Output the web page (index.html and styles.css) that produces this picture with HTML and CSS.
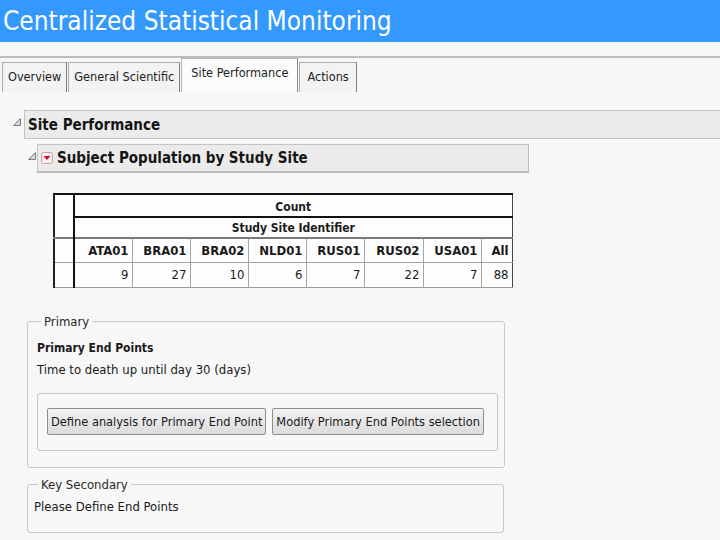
FILE: index.html
```html
<!DOCTYPE html>
<html lang="en">
<head>
    <meta charset="UTF-8">
    <title>Centralized Statistical Monitoring</title>
    <link rel="stylesheet" href="styles.css">
</head>
<body>

    <!-- Title bar -->
    <div class="titlebar">Centralized Statistical Monitoring</div>
    <div class="rule"></div>

    <!-- Tabs -->
    <div class="tabs">
        <div class="tab">Overview</div>
        <div class="tab">General Scientific</div>
        <div class="tab active">Site Performance</div>
        <div class="tab">Actions</div>
    </div>

    <!-- Outline: Site Performance -->
    <div class="outline">
        <svg class="disclose" width="8" height="8" viewBox="0 0 8 8"><polygon points="0.5,7.5 7.5,0.5 7.5,7.5" fill="#d8d8d8" stroke="#7a7a7a"/></svg>
        <div class="outline-bar">Site Performance</div>
    </div>

    <div class="outline sub">
        <svg class="disclose" width="8" height="8" viewBox="0 0 8 8"><polygon points="0.5,7.5 7.5,0.5 7.5,7.5" fill="#d8d8d8" stroke="#7a7a7a"/></svg>
        <div class="outline-bar">
            <svg class="hotspot" width="12" height="12" viewBox="0 0 12 12">
                <rect x="0.5" y="0.5" width="11" height="11" rx="2" fill="#fbeff0" stroke="#c8a0a4"/>
                <polygon points="2.5,4 9.5,4 6,8" fill="#d0102a"/>
            </svg>
            Subject Population by Study Site
        </div>
    </div>

    <!-- Count table -->
    <table class="counts">
        <colgroup>
            <col class="c-stub">
            <col class="c-site">
            <col class="c-site">
            <col class="c-site">
            <col class="c-site">
            <col class="c-site">
            <col class="c-wide">
            <col class="c-site">
            <col class="c-all">
        </colgroup>
        <tr>
            <td class="corner" rowspan="2"></td>
            <th colspan="8" class="count-head">Count</th>
        </tr>
        <tr>
            <th colspan="8" class="group-head">Study Site Identifier</th>
        </tr>
        <tr class="site-row">
            <td class="stub"></td>
            <th>ATA01</th>
            <th>BRA01</th>
            <th>BRA02</th>
            <th>NLD01</th>
            <th>RUS01</th>
            <th>RUS02</th>
            <th>USA01</th>
            <th>All</th>
        </tr>
        <tr class="data-row">
            <td class="stub"></td>
            <td>9</td>
            <td>27</td>
            <td>10</td>
            <td>6</td>
            <td>7</td>
            <td>22</td>
            <td>7</td>
            <td>88</td>
        </tr>
    </table>

    <!-- End point panels -->
    <fieldset class="panel primary">
        <legend>Primary</legend>
        <p class="panel-title">Primary End Points</p>
        <p>Time to death up until day 30 (days)</p>
        <div class="button-box">
            <button>Define analysis for Primary End Point</button>
            <button>Modify Primary End Points selection</button>
        </div>
    </fieldset>

    <fieldset class="panel secondary">
        <legend>Key Secondary</legend>
        <p>Please Define End Points</p>
    </fieldset>

</body>
</html>
```

FILE: styles.css
```css
/* Reset */
* {
    margin: 0;
    padding: 0;
    box-sizing: border-box;
}

body {
    background-color: #f7f7f7;
    color: #1a1a1a;
    font-family: "DejaVu Sans Condensed", "DejaVu Sans", sans-serif;
    font-size: 13px;
}

/* Title bar */
.titlebar {
    height: 42px;
    line-height: 42px;
    padding-left: 3px;
    background-color: #3399ff;
    color: #fff;
    font-size: 26px;
}

.rule {
    margin-top: 14px;
    border-top: 2px solid #bdbdbd;
}

/* Tabs */
.tabs {
    display: flex;
    align-items: flex-end;
    gap: 1px;
    padding-left: 2px;
    height: 34px;
}

.tab {
    height: 30px;
    line-height: 28px;
    padding: 0 5px;
    border: 1px solid #ababab;
    border-bottom: none;
    border-right-color: #7d7d7d;
    background-color: #f3f3f3;
    font-size: 12.6px;
    color: #222;
}

.tab:last-child {
    padding: 0 7px;
}

.tab.active {
    height: 34px;
    line-height: 28px;
    padding: 0 9px;
    background-color: #fbfbfb;
    border-color: #b5b5b5;
    border-right-color: #8a8a8a;
}

/* Outline nodes */
.outline {
    display: flex;
    align-items: center;
    margin-top: 18px;
    padding-left: 13px;
    gap: 3px;
}

.outline .disclose {
    margin-top: -6px;
}

.outline-bar {
    flex: 1;
    display: flex;
    align-items: center;
    height: 29px;
    padding-left: 3px;
    background-color: #ebebeb;
    border: 1px solid #c4c4c4;
    border-right: none;
    font-weight: bold;
    font-size: 15px;
    color: #151515;
}

.outline.sub {
    margin-top: 5px;
    padding-left: 28px;
    gap: 1px;
}

.outline.sub .outline-bar {
    flex: 0 0 492px;
    border-right: 1px solid #bdbdbd;
    border-bottom: 2px solid #bdbdbd;
}

.hotspot {
    margin-right: 4px;
}

/* Count table */
.counts {
    margin: 20px 0 0 53px;
    width: 458px;
    table-layout: fixed;
    border-collapse: collapse;
    border-top: 2px solid #111;
    border-left: 2px solid #222;
    border-right: 1px solid #444;
    border-bottom: 1px solid #9a9a9a;
    background-color: #fdfdfd;
}

.counts .c-stub { width: 20px; }
.counts .c-site { width: 58px; }
.counts .c-wide { width: 59px; }
.counts .c-all { width: 31px; }

.counts th,
.counts td {
    font-size: 13px;
    padding: 0 3px;
}

.counts .corner,
.counts .stub {
    border-right: 2px solid #111;
}

.counts .count-head {
    height: 23px;
    padding-top: 3px;
    font-size: 12px;
    text-align: center;
    border-bottom: 2px solid #111;
}

.counts .group-head {
    height: 21px;
    font-size: 12px;
    text-align: center;
}

.counts .site-row th,
.counts .site-row td {
    height: 24px;
    text-align: right;
    border-top: 2px solid #7a7a7a;
    border-left: 1px solid #a5a5a5;
}

.counts .data-row td {
    height: 25px;
    text-align: right;
    border-top: 1px solid #a5a5a5;
    border-left: 1px solid #a5a5a5;
}

.counts .site-row .stub,
.counts .data-row .stub {
    border-left: none;
    border-right: 2px solid #111;
}

/* End point panels */
.panel {
    margin-left: 27px;
    width: 477px;
    border: 1px solid #c9c9c9;
    border-radius: 3px;
    padding: 8px 6px 14px 9px;
}

.panel legend {
    margin-left: 4px;
    padding: 0 3px;
    font-size: 13px;
    color: #2a2a2a;
}

.panel p {
    line-height: 22px;
}

.panel .panel-title {
    font-weight: bold;
    font-size: 12px;
}

.primary {
    margin-top: 26px;
    height: 154px;
}

.button-box {
    margin-top: 12px;
    display: flex;
    gap: 6px;
    height: 58px;
    padding: 14px 9px;
    border: 1px solid #c4c4c4;
    border-radius: 3px;
    width: 461px;
}

.button-box button {
    height: 27px;
    padding: 0 3px;
    border: 1px solid #8e8e8e;
    border-radius: 2px;
    background: linear-gradient(#f2f2f2, #dcdcdc);
    font-family: inherit;
    font-size: 12.7px;
    white-space: nowrap;
    color: #1a1a1a;
}

.secondary {
    margin-top: 9px;
    height: 56px;
    padding-top: 4px;
    padding-left: 6px;
}
```
